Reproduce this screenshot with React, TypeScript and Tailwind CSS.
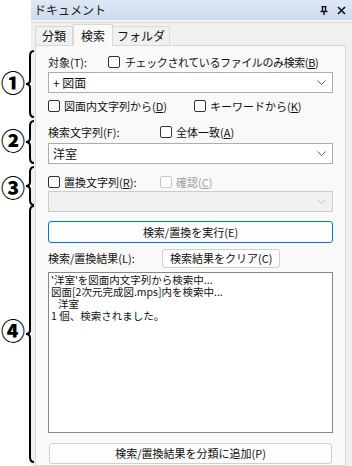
import React from "react";

const font = { fontFamily: '"Noto Sans CJK JP", "Noto Sans", sans-serif' };

function Check({ disabled }: { disabled?: boolean }) {
  return (
    <span
      className={`inline-block w-[12px] h-[12px] border rounded-[2px] bg-white shrink-0 ${
        disabled ? "border-[#c8c8c8] bg-[#f7f7f7]" : "border-[#333333]"
      }`}
    />
  );
}

function Chevron({ disabled }: { disabled?: boolean }) {
  return (
    <svg width="9" height="5" viewBox="0 0 9 5" className="shrink-0">
      <polyline
        points="0.5,0.5 4.5,4.5 8.5,0.5"
        fill="none"
        stroke={disabled ? "#c4c4c4" : "#606060"}
        strokeWidth="1"
      />
    </svg>
  );
}

function Combo({ value, disabled }: { value?: string; disabled?: boolean }) {
  return (
    <div
      className={`h-[21px] flex items-center justify-between pl-[4px] pr-[6px] border ${
        disabled ? "border-[#cccccc] bg-[#f0f0f0]" : "border-[#adadad] bg-white"
      }`}
    >
      <span className="text-[12px] leading-none text-[#111]">{value}</span>
      <Chevron disabled={disabled} />
    </div>
  );
}

function Brace({ top, height }: { top: number; height: number }) {
  const h = height;
  const m = h / 2;
  return (
    <svg
      width="10"
      height={h}
      viewBox={`0 0 10 ${h}`}
      className="absolute left-[25px]"
      style={{ top }}
    >
      <path
        d={`M9 1 Q5 1 5 6 L5 ${m - 4} Q5 ${m} 1 ${m} Q5 ${m} 5 ${m + 4} L5 ${h - 6} Q5 ${h - 1} 9 ${h - 1}`}
        fill="none"
        stroke="#000"
        strokeWidth="2"
      />
    </svg>
  );
}

function Num({ top, children }: { top: number; children: React.ReactNode }) {
  return (
    <div
      className="absolute left-[0px] w-[26px] text-center text-[24px] leading-none font-black text-black"
      style={{ top }}
    >
      {children}
    </div>
  );
}

export default function App() {
  return (
    <div
      className="relative w-[352px] h-[466px] bg-white overflow-hidden flex"
      style={font}
    >
      <div className="w-[31px] shrink-0" />
      <div className="flex-1 flex flex-col bg-[#f0f0f0]">
        {/* title bar */}
        <div className="h-[20px] flex items-center justify-between pl-[3px] pr-[6px] bg-gradient-to-b from-[#dfe9f5] to-[#cbdaed]">
          <span className="text-[12px] leading-none text-[#1e1e1e]">ドキュメント</span>
          <div className="flex items-center gap-[9px]">
            <svg width="8" height="9" viewBox="0 0 8 9">
              <path d="M1.5 0.5 H6.5 M2.5 0.5 V5 M5.5 0.5 V5 M0.5 5.5 H7.5 M4 5.5 V9" stroke="#111" strokeWidth="1.4" fill="none" />
            </svg>
            <svg width="9" height="9" viewBox="0 0 9 9">
              <path d="M1 1 L8 8 M8 1 L1 8" stroke="#111" strokeWidth="1.6" />
            </svg>
          </div>
        </div>
        {/* tabs */}
        <div className="h-[2px]" />
        <div className="h-[23px] flex items-end pl-[4px] border-t border-[#d9d9d9]">
          <div className="h-[19px] px-[6px] flex items-center text-[12px] text-[#111] border border-b-0 border-[#d9d9d9] bg-[#f0f0f0]">分類</div>
          <div className="h-[22px] -mb-[1px] px-[7px] flex items-center text-[12px] text-[#111] border border-b-0 border-[#d9d9d9] bg-[#f9f9f9] relative z-10">検索</div>
          <div className="h-[19px] px-[4px] flex items-center text-[12px] text-[#111] border border-b-0 border-l-0 border-[#d9d9d9] bg-[#f0f0f0]">フォルダ</div>
        </div>
        {/* panel */}
        <div className="flex-1 ml-[4px] mr-[6px] border border-[#d9d9d9] bg-[#f9f9f9] pl-[12px] pr-[12px] flex flex-col text-[11px] leading-none text-[#111] whitespace-nowrap">
          <div className="h-[10px]" />
          <div className="flex items-center h-[12px]">
            <span className="w-[60px]">対象(T):</span>
            <Check />
            <span className="ml-[5px] tracking-[-0.4px]">チェックされているファイルのみ検索(<u>B</u>)</span>
          </div>
          <div className="h-[4px]" />
          <Combo value="+ 図面" />
          <div className="h-[7px]" />
          <div className="flex items-center h-[12px]">
            <Check />
            <span className="ml-[4px] w-[130px]">図面内文字列から(<u>D</u>)</span>
            <Check />
            <span className="ml-[4px]">キーワードから(<u>K</u>)</span>
          </div>
          <div className="h-[14px]" />
          <div className="flex items-center h-[12px]">
            <span className="w-[112px]">検索文字列(F):</span>
            <Check />
            <span className="ml-[4px]">全体一致(<u>A</u>)</span>
          </div>
          <div className="h-[5px]" />
          <Combo value="洋室" />
          <div className="h-[12px]" />
          <div className="flex items-center h-[12px]">
            <Check />
            <span className="ml-[4px] w-[96px]">置換文字列(<u>R</u>):</span>
            <Check disabled />
            <span className="ml-[4px] text-[#a0a0a0]">確認(<u>C</u>)</span>
          </div>
          <div className="h-[3px]" />
          <div className="h-[19px]">
            <Combo disabled />
          </div>
          <div className="h-[11px]" />
          <div className="h-[22px] flex items-center justify-center rounded-[3px] border border-[#0078d7] bg-[#fdfdfd]">
            検索/置換を実行(E)
          </div>
          <div className="h-[6px]" />
          <div className="flex items-center h-[19px]">
            <span className="w-[114px]">検索/置換結果(L):</span>
            <div className="h-[19px] px-[7px] flex items-center rounded-[3px] border border-[#d0d0d0] bg-[#fdfdfd]">
              検索結果をクリア(C)
            </div>
          </div>
          <div className="h-[4px]" />
          <div className="h-[161px] border border-[#828790] bg-white pl-[2px] pt-[1px] text-[10.5px] leading-[12px] whitespace-pre">
            <div className="h-[12px]">'洋室'を図面内文字列から検索中...</div>
            <div className="h-[12px]">図面[2次元完成図.mps]内を検索中...</div>
            <div className="h-[12px]">{"   洋室"}</div>
            <div className="h-[12px]">1 個、検索されました。</div>
          </div>
          <div className="h-[10px]" />
          <div className="h-[21px] flex items-center justify-center rounded-[3px] border border-[#d0d0d0] bg-[#fdfdfd] mx-[1px]">
            検索/置換結果を分類に追加(P)
          </div>
        </div>
      </div>

      {/* annotations */}
      <Num top={70}>①</Num>
      <Num top={128}>②</Num>
      <Num top={175}>③</Num>
      <Num top={318}>④</Num>
      <Brace top={50} height={68} />
      <Brace top={120} height={44} />
      <Brace top={166} height={40} />
      <Brace top={205} height={258} />
    </div>
  );
}
